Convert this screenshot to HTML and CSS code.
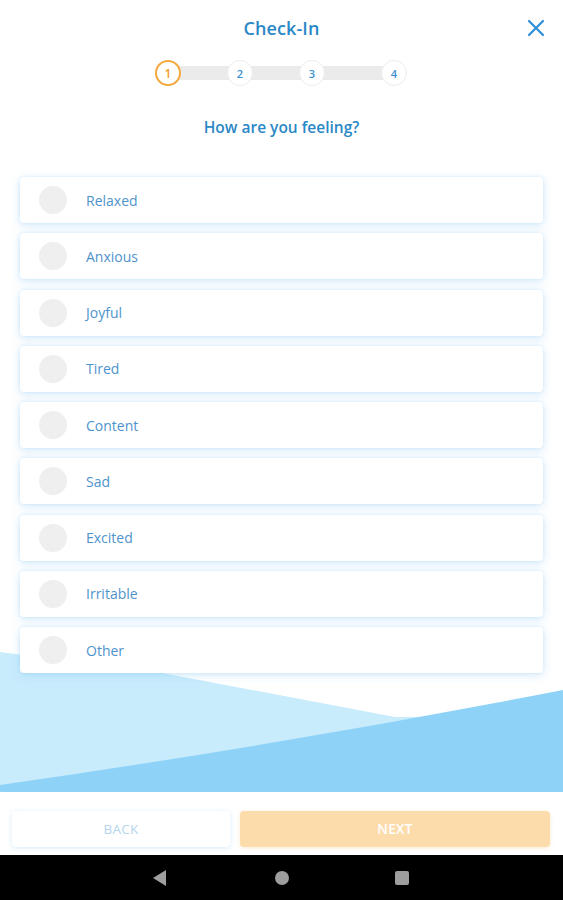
FILE: index.html
```html
<!DOCTYPE html>
<html>
<head>
<meta charset="utf-8">
<link rel="stylesheet" href="styles.css">
</head>
<body>
<div class="screen">
  <svg class="waves" width="563" height="160" viewBox="0 0 563 160" preserveAspectRatio="none">
    <polygon points="0,12 162,33 395,77 563,77 563,160 0,160" fill="#c9ecfc"/>
    <path d="M0,145 Q280,105 563,50 L563,152 L0,152 Z" fill="#8fd2f8"/>
  </svg>
  <header class="header">
    <span></span>
    <h1 class="title">Check-In</h1>
    <button class="close" aria-label="Close">
      <svg width="18" height="18" viewBox="0 0 18 18"><path d="M2 2 L16 16 M16 2 L2 16" stroke="#2f8fd6" stroke-width="2.2" stroke-linecap="round"/></svg>
    </button>
  </header>
  <div class="stepper">
    <div class="track"></div>
    <span class="step active s1">1</span>
    <span class="step s2">2</span>
    <span class="step s3">3</span>
    <span class="step s4">4</span>
  </div>
  <h2 class="question">How are you feeling?</h2>
  <ul class="options">
    <li class="option"><span class="radio"></span><span class="label">Relaxed</span></li>
    <li class="option"><span class="radio"></span><span class="label">Anxious</span></li>
    <li class="option"><span class="radio"></span><span class="label">Joyful</span></li>
    <li class="option"><span class="radio"></span><span class="label">Tired</span></li>
    <li class="option"><span class="radio"></span><span class="label">Content</span></li>
    <li class="option"><span class="radio"></span><span class="label">Sad</span></li>
    <li class="option"><span class="radio"></span><span class="label">Excited</span></li>
    <li class="option"><span class="radio"></span><span class="label">Irritable</span></li>
    <li class="option"><span class="radio"></span><span class="label">Other</span></li>
  </ul>
  <div class="spacer"></div>
  <footer class="footer">
    <button class="btn back">BACK</button>
    <button class="btn next">NEXT</button>
  </footer>
</div>
<nav class="navbar">
  <svg width="16" height="18" viewBox="0 0 16 18"><polygon points="14,1 14,17 1,9" fill="#9e9e9e"/></svg>
  <svg width="16" height="16" viewBox="0 0 16 16"><circle cx="8" cy="8" r="7" fill="#9e9e9e"/></svg>
  <svg width="16" height="16" viewBox="0 0 16 16"><rect x="1" y="1" width="14" height="14" rx="2" fill="#9e9e9e"/></svg>
</nav>
</body>
</html>
```
FILE: styles.css
```css
* { box-sizing: border-box; }
html, body { margin: 0; padding: 0; }
body {
  width: 563px;
  height: 900px;
  background: #fff;
  font-family: "Open Sans", "Noto Sans", sans-serif;
  overflow: hidden;
}
.screen {
  position: relative;
  height: 855px;
  display: flex;
  flex-direction: column;
}
.waves {
  position: absolute;
  left: 0;
  top: 640px;
  z-index: 0;
}
.header {
  position: relative;
  z-index: 1;
  display: grid;
  grid-template-columns: 1fr auto 1fr;
  align-items: center;
  height: 56px;
}
.title {
  margin: 0;
  font-size: 18px;
  font-weight: 600;
  color: #2a88c6;
  letter-spacing: 0.1px;
}
.close {
  justify-self: end;
  margin-right: 17px;
  width: 20px;
  height: 20px;
  padding: 1px;
  border: 0;
  background: none;
  display: flex;
  align-items: center;
  justify-content: center;
}
.stepper {
  position: relative;
  z-index: 1;
  margin: 4px 0 0 155px;
  width: 253px;
  height: 26px;
  display: flex;
  align-items: center;
}
.track {
  position: absolute;
  left: 13px;
  right: 13px;
  top: 6px;
  height: 14px;
  background: #ebebeb;
}
.step {
  position: relative;
  width: 26px;
  height: 26px;
  border-radius: 50%;
  background: #fff;
  border: 1.5px solid #ececec;
  color: #3a8fd0;
  font-size: 11px;
  font-weight: 600;
  display: flex;
  align-items: center;
  justify-content: center;
}
.step.active {
  border: 2px solid #f5a83c;
  color: #f0a030;
  font-weight: 600;
  font-size: 12px;
}
.s2 { margin-left: 46px; }
.s3 { margin-left: 46px; }
.s4 { margin-left: 56px; }
.question {
  position: relative;
  z-index: 1;
  margin: 30px 0 0;
  text-align: center;
  font-size: 15.5px;
  font-weight: 600;
  color: #2a88c6;
  line-height: 22px;
}
.options {
  position: relative;
  z-index: 1;
  list-style: none;
  margin: 39px 20px 0;
  padding: 0;
  display: flex;
  flex-direction: column;
  gap: 10.25px;
}
.option {
  height: 46px;
  background: #fff;
  border-radius: 4px;
  box-shadow: 0 2px 10px rgba(120, 190, 240, 0.35), 0 0 3px rgba(120, 190, 240, 0.2);
  display: flex;
  align-items: center;
  padding-left: 19px;
}
.radio {
  width: 28px;
  height: 28px;
  border-radius: 50%;
  background: #efefef;
}
.label {
  margin-left: 19px;
  font-size: 14px;
  color: #4f93cc;
}
.spacer { flex: 1; }
.footer {
  position: relative;
  z-index: 1;
  height: 63px;
  background: #fff;
  display: flex;
  gap: 10px;
  padding: 19px 13px 8px 12px;
}
.btn {
  height: 36px;
  border: 0;
  border-radius: 4px;
  font-family: "Open Sans", "Noto Sans", sans-serif;
  font-size: 13.5px;
  letter-spacing: 0.3px;
}
.back {
  width: 218px;
  background: #fff;
  color: #b4d6ee;
  box-shadow: 0 1px 5px rgba(120, 190, 240, 0.3);
}
.next {
  flex: 1;
  background: #fddcac;
  color: #fff;
  font-weight: 600;
  box-shadow: 0 1px 4px rgba(240, 190, 120, 0.3);
}
.navbar {
  height: 45px;
  background: #000;
  display: flex;
  align-items: center;
  padding-left: 152px;
  gap: 0;
}
.navbar svg:nth-child(1) { margin-right: 106px; }
.navbar svg:nth-child(2) { margin-right: 104px; }
```
